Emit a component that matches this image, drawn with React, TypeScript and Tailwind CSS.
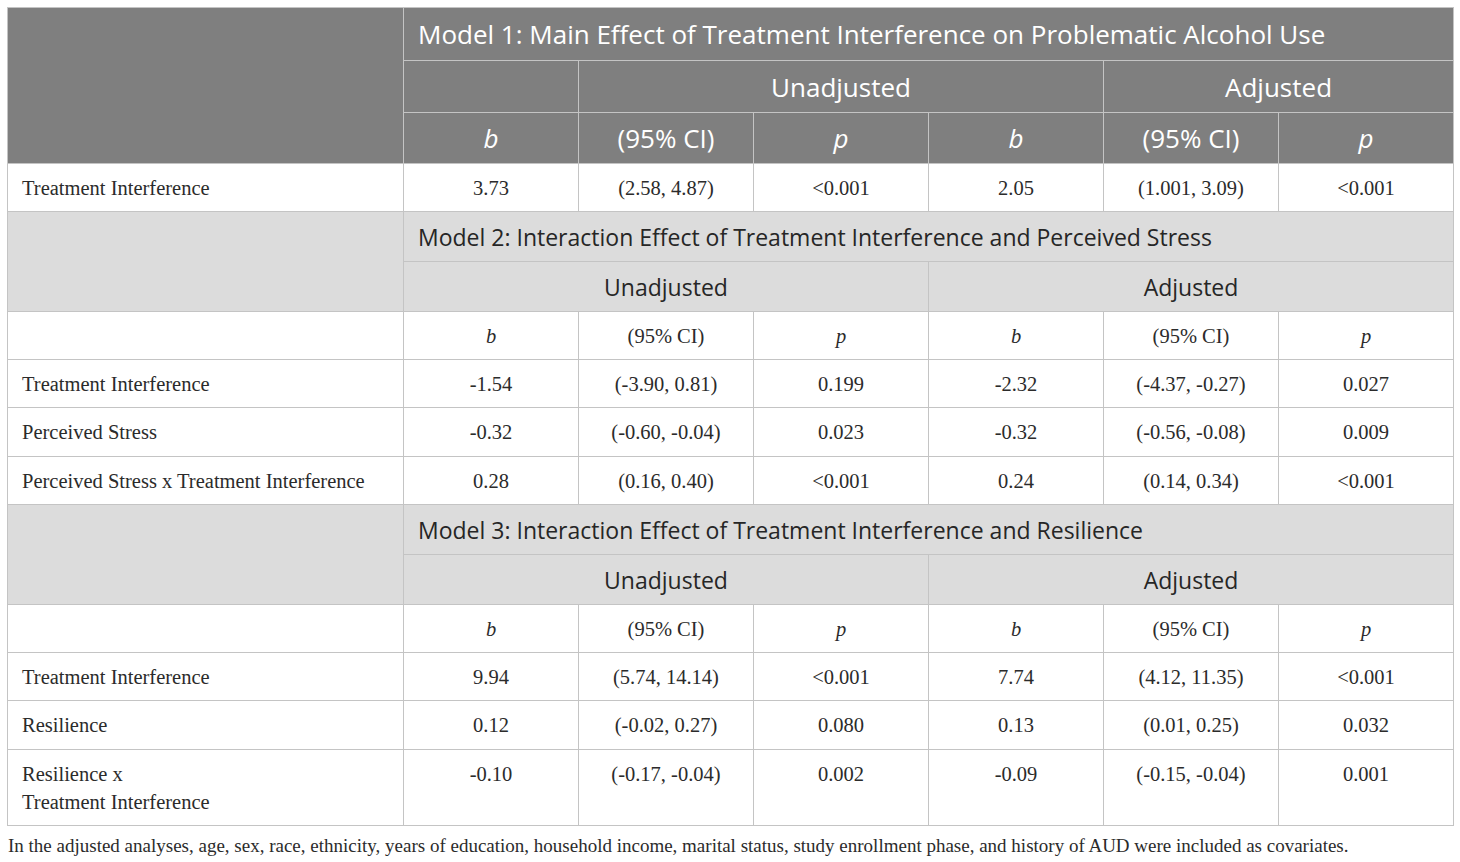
import React from "react";

const sans = "font-['Open_Sans','Liberation_Sans',sans-serif]";
const serif = "font-['Liberation_Serif','Times_New_Roman',serif]";

type Row = { label: string[]; vals: string[]; h: string };

const model2: Row[] = [
  { label: ["Treatment Interference"], vals: ["-1.54", "(-3.90, 0.81)", "0.199", "-2.32", "(-4.37, -0.27)", "0.027"], h: "h-[48px]" },
  { label: ["Perceived Stress"], vals: ["-0.32", "(-0.60, -0.04)", "0.023", "-0.32", "(-0.56, -0.08)", "0.009"], h: "h-[49px]" },
  { label: ["Perceived Stress x Treatment Interference"], vals: ["0.28", "(0.16, 0.40)", "<0.001", "0.24", "(0.14, 0.34)", "<0.001"], h: "h-[48px]" },
];

const model3: Row[] = [
  { label: ["Treatment Interference"], vals: ["9.94", "(5.74, 14.14)", "<0.001", "7.74", "(4.12, 11.35)", "<0.001"], h: "h-[48px]" },
  { label: ["Resilience"], vals: ["0.12", "(-0.02, 0.27)", "0.080", "0.13", "(0.01, 0.25)", "0.032"], h: "h-[49px]" },
  { label: ["Resilience x", "Treatment Interference"], vals: ["-0.10", "(-0.17, -0.04)", "0.002", "-0.09", "(-0.15, -0.04)", "0.001"], h: "h-[76px]" },
];

const cell = "border border-[#c4c4c4] p-0";
const body = `${serif} text-[20.5px] leading-[28px] text-[#2b2b2b]`;

function DataRow({ row }: { row: Row }) {
  const top = row.label.length > 1;
  const v = top ? "align-top pt-[10px]" : "align-middle";
  return (
    <tr className={row.h}>
      <td className={`${cell} ${body} ${v} pl-[14px] text-left`}>
        {row.label.map((l) => (
          <div key={l}>{l}</div>
        ))}
      </td>
      {row.vals.map((val, i) => (
        <td key={i} className={`${cell} ${body} ${v} text-center`}>
          {val}
        </td>
      ))}
    </tr>
  );
}

function SubHead() {
  const c = `${cell} ${body} align-middle text-center`;
  return (
    <tr className="h-[48px]">
      <td className={c}></td>
      <td className={c}><i>b</i></td>
      <td className={c}>(95% CI)</td>
      <td className={c}><i>p</i></td>
      <td className={c}><i>b</i></td>
      <td className={c}>(95% CI)</td>
      <td className={c}><i>p</i></td>
    </tr>
  );
}

function LightModel({ title, rows }: { title: string; rows: Row[] }) {
  const head = `${cell} bg-[#dcdcdc] ${sans} text-[23px] leading-[28px] text-[#262626] align-middle`;
  return (
    <>
      <tr className="h-[50px]">
        <td rowSpan={2} className={`${cell} bg-[#dcdcdc]`}></td>
        <td colSpan={6} className={`${head} text-left pl-[14px]`}>
          {title}
        </td>
      </tr>
      <tr className="h-[50px]">
        <td colSpan={3} className={`${head} text-center`}>Unadjusted</td>
        <td colSpan={3} className={`${head} text-center`}>Adjusted</td>
      </tr>
      <SubHead />
      {rows.map((r) => (
        <DataRow key={r.label.join(" ")} row={r} />
      ))}
    </>
  );
}

export default function App() {
  const dark = `${cell} bg-[#7f7f7f] border-[#a3a3a3] ${sans} text-[26px] leading-[30px] text-white align-middle`;
  return (
    <div className="w-[1460px] h-[862px] bg-white pt-[7px] pl-[7px]">
      <table className="table-fixed border-collapse w-[1446px]">
        <colgroup>
          <col className="w-[396px]" />
          <col className="w-[175px]" />
          <col className="w-[175px]" />
          <col className="w-[175px]" />
          <col className="w-[175px]" />
          <col className="w-[175px]" />
          <col className="w-[175px]" />
        </colgroup>
        <tbody>
          <tr className="h-[53px]">
            <td rowSpan={3} className={`${cell} bg-[#7f7f7f] border-[#c4c4c4]`}></td>
            <td colSpan={6} className={`${dark} text-left pl-[14px]`}>
              Model 1: Main Effect of Treatment Interference on Problematic Alcohol Use
            </td>
          </tr>
          <tr className="h-[52px]">
            <td className={dark}></td>
            <td colSpan={3} className={`${dark} text-center`}>Unadjusted</td>
            <td colSpan={2} className={`${dark} text-center`}>Adjusted</td>
          </tr>
          <tr className="h-[51px]">
            <td className={`${dark} text-center`}><i>b</i></td>
            <td className={`${dark} text-center`}>(95% CI)</td>
            <td className={`${dark} text-center`}><i>p</i></td>
            <td className={`${dark} text-center`}><i>b</i></td>
            <td className={`${dark} text-center`}>(95% CI)</td>
            <td className={`${dark} text-center`}><i>p</i></td>
          </tr>
          <DataRow
            row={{ label: ["Treatment Interference"], vals: ["3.73", "(2.58, 4.87)", "<0.001", "2.05", "(1.001, 3.09)", "<0.001"], h: "h-[48px]" }}
          />
          <LightModel title="Model 2: Interaction Effect of Treatment Interference and Perceived Stress" rows={model2} />
          <LightModel title="Model 3: Interaction Effect of Treatment Interference and Resilience" rows={model3} />
        </tbody>
      </table>
      <p className={`${serif} text-[19px] leading-[28px] text-[#2b2b2b] mt-[6px] ml-px whitespace-nowrap`}>
        In the adjusted analyses, age, sex, race, ethnicity, years of education, household income, marital status, study enrollment phase, and history of AUD were included as covariates.
      </p>
    </div>
  );
}
